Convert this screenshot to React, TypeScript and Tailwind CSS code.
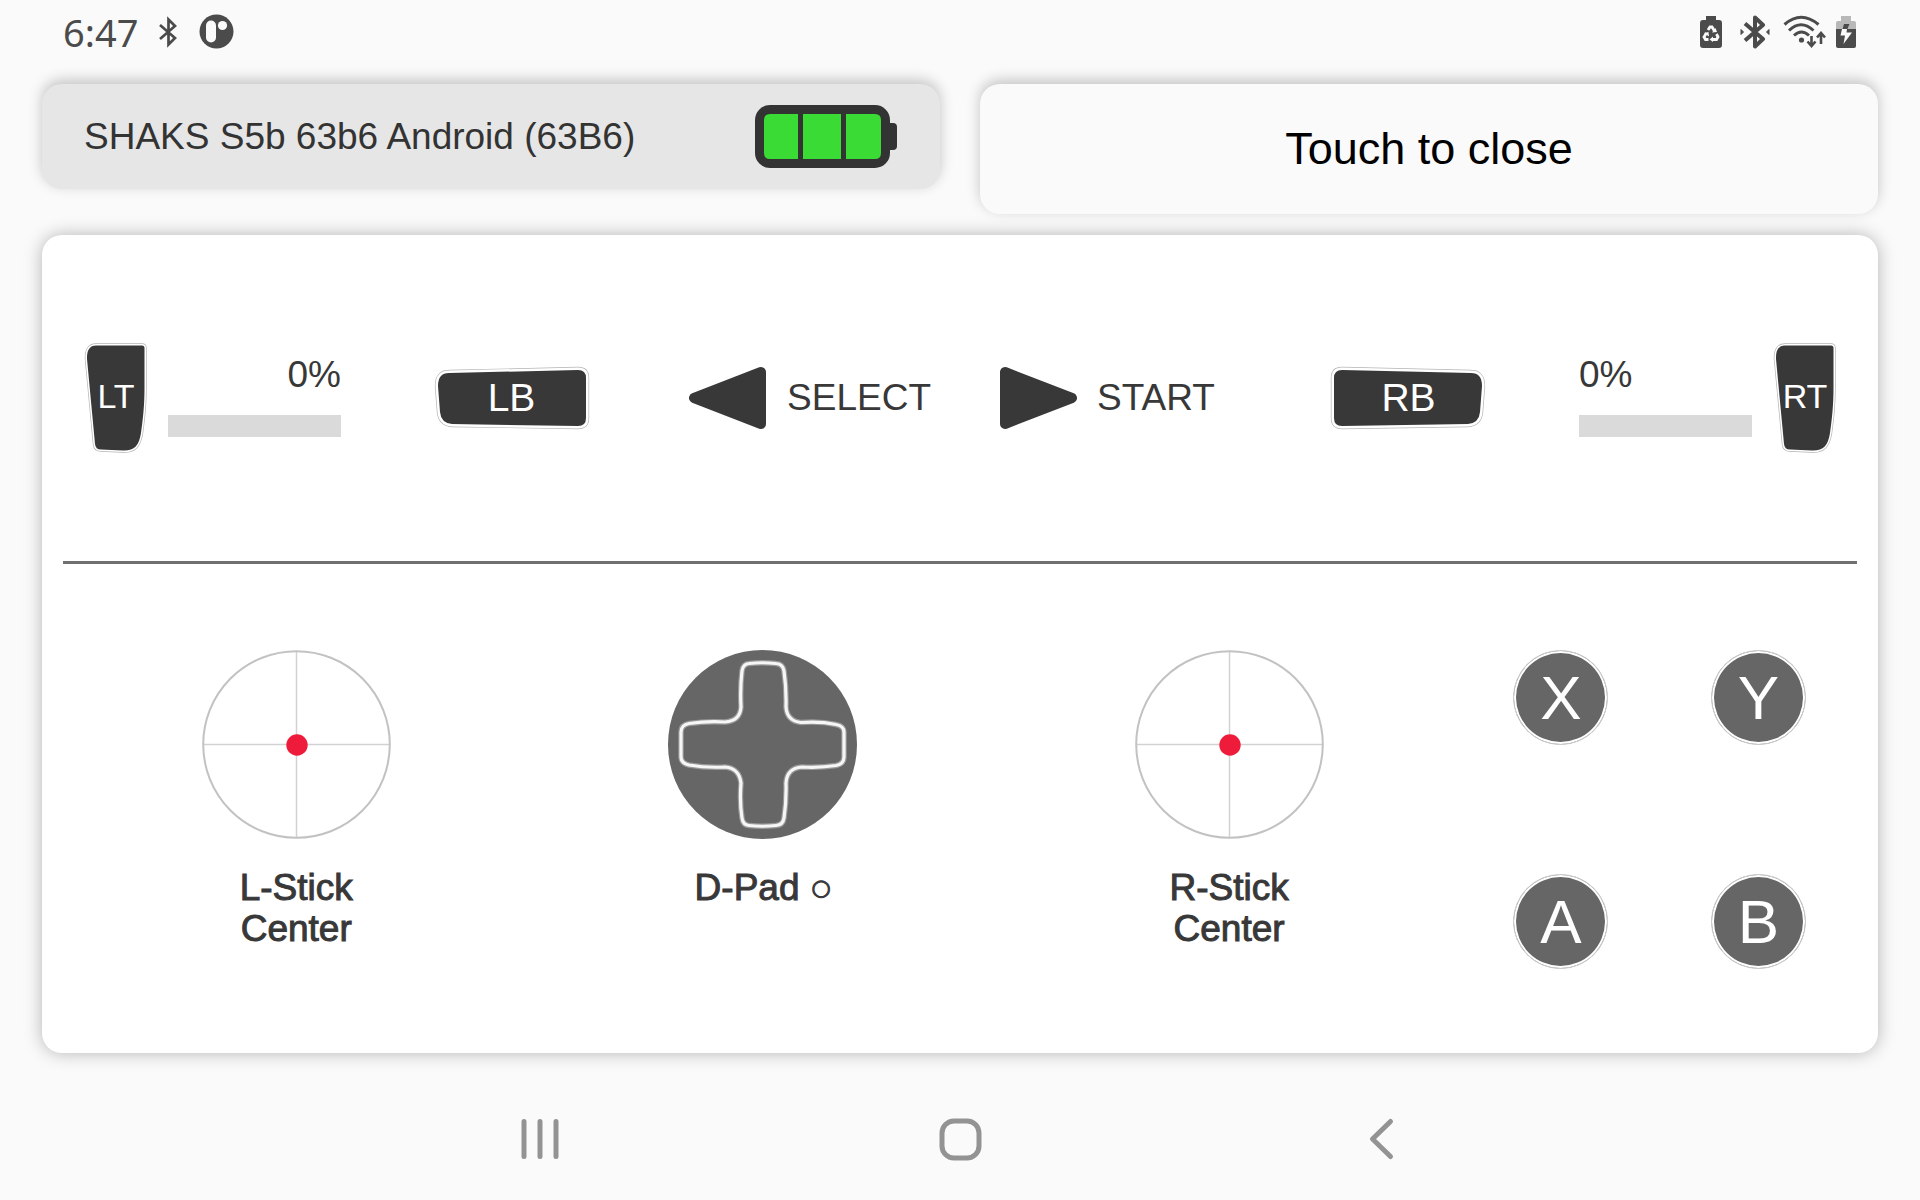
import React from 'react';

const TRIGGER_PATH =
  'M12 2.5H58Q60.5 2.5 60.5 5V45C60.5 62 59 76 57 90C55 103 50 108 39 107.5L17 106.5Q11.5 106.5 11 101L3 16Q2.5 2.5 12 2.5Z';
const BUMPER_PATH = 'M15 7L144 4Q152 4 152 12V52Q152 60 144 60L18 58Q7 57 6 46L4 20Q4 7 15 7Z';
const DPAD_PATH =
  'M81 13.5Q94 12 108 13.5Q115 14 116 21Q118.5 38 118 57Q119 71 133 72.5Q152 71 168 74.5Q176 76 176 82V107Q176 114 168 115.5Q152 118 134 117Q119 118 118 133Q118.5 152 116 168Q115 175 108 175.5Q94 177 81 175.5Q75 175 74 168Q71.5 152 73 133Q71 118 57 117Q38 118 21 115Q13 113 13 107V82Q13 75 21 73.5Q38 71 57 72Q72 71 73 57Q72 38 74 21Q75 14 81 13.5Z';

function StatusBar() {
  return (
    <header className="flex h-16 items-center justify-between px-[63px] text-[#4b4b4b]">
      <div className="flex items-center">
        <span className="font-['Noto_Sans',sans-serif] text-[38px] leading-[48px]">6:47</span>
        <svg className="ml-5 h-8 w-5" viewBox="0 0 20 32" fill="none" stroke="currentColor" strokeWidth="2.7">
          <path d="M2 9L17 22L10.500 28.500V3.500L17 10L2 23" />
        </svg>
        <svg className="ml-5 h-9 w-9" viewBox="0 0 36 36">
          <circle cx="18.500" cy="17.500" r="17" fill="currentColor" />
          <rect x="8" y="6.500" width="10" height="22" rx="5" fill="#fafafa" />
          <circle cx="24.500" cy="11.500" r="4.600" fill="#fafafa" />
        </svg>
      </div>

      <div className="flex items-center">
        <svg className="h-[34px] w-6" viewBox="0 0 24 34">
          <path
            d="M7 1H17V5H20Q23 5 23 8V30Q23 33 20 33H4Q1 33 1 30V8Q1 5 4 5H7Z"
            fill="currentColor"
          />
          <path
            d="M9 15L11 12H13L15.500 16M17.500 19L19 22L17.500 24.500H13.500M9.500 24.500H6.500L5 22L7.500 18"
            fill="none"
            stroke="#fafafa"
            strokeWidth="2.800"
          />
          <path d="M13 17.500L18 17L16.500 13Z M14 21.500V27L10.500 24.500Z M5 18L9.500 17L10 21.500Z" fill="#fafafa" />
        </svg>
        <svg className="ml-4 h-[34px] w-8" viewBox="0 0 32 34">
          <path
            d="M6 8.500L24 24L16 31.500V2.500L24 10L6 25.500"
            fill="none"
            stroke="currentColor"
            strokeWidth="4"
            strokeLinejoin="round"
          />
          <path d="M2 14.500L4.500 17L2 19.500Z M30 14.500L27.500 17L30 19.500Z" fill="currentColor" stroke="currentColor" />
        </svg>
        <svg className="ml-3 h-[34px] w-11" viewBox="0 0 44 34" fill="none" stroke="currentColor" strokeWidth="3">
          <path d="M1.500 9.500Q18 -5 35.500 9.500M6 15.500Q18 4 30.500 15.500M11 20.500Q18.500 13.500 26 20.500" />
          <circle cx="18.500" cy="25" r="2.600" fill="currentColor" stroke="none" />
          <path d="M28.500 21V30M24.500 26.500L28.500 31L32.500 26.500M38 29V20M34 22.500L38 18L42 22.500" strokeWidth="2.600" />
        </svg>
        <svg className="ml-2 h-[34px] w-[22px]" viewBox="0 0 22 34">
          <path d="M6 1H16V6H19Q21 6 21 8V14H1V8Q1 6 3 6H6Z" fill="#b8b8b8" />
          <path d="M1 14H21V31Q21 33 19 33H3Q1 33 1 31Z" fill="currentColor" />
          <path d="M9 9H14.500L11.500 16H7Z" fill="currentColor" />
          <path d="M7 14H12L11.500 17.500H17L8.500 29L10 20.500H5.500Z" fill="#fafafa" />
        </svg>
      </div>
    </header>
  );
}

function DeviceBattery() {
  return (
    <svg className="h-[63px] w-[142px]" viewBox="0 0 142 63" role="img" aria-label="Battery full">
      <rect x="130" y="18" width="12" height="27" rx="4" fill="#333" />
      <rect width="135" height="63" rx="15" fill="#333" />
      <path d="M43 9V54H15Q9 54 9 48V15Q9 9 15 9Z M48 9H86V54H48Z M91 9H120Q126 9 126 15V48Q126 54 120 54H91Z" fill="#3adb34" />
    </svg>
  );
}

// dark key with a white rim and a hairline around it
function KeyShape({ d, rim, mirror }: { d: string; rim: number; mirror?: string }) {
  return (
    <g transform={mirror} strokeLinejoin="round">
      <path d={d} fill="#fff" stroke="#b4b4b4" strokeWidth={rim + 1.4} />
      <path d={d} fill="#383838" stroke="#fff" strokeWidth={rim} />
      <path d={d} fill="#383838" />
    </g>
  );
}

function Trigger({ label }: { label: string }) {
  return (
    <button type="button" className="grid h-[109px] w-[63px] place-items-center">
      <svg className="col-start-1 row-start-1 h-full w-full overflow-visible" viewBox="0 0 63 109">
        <KeyShape d={TRIGGER_PATH} rim={3} />
      </svg>
      <span className="z-10 col-start-1 row-start-1 pb-1 pl-px text-[34px] leading-10 text-white">{label}</span>
    </button>
  );
}

function Bumper({ label, mirror }: { label: string; mirror?: string }) {
  return (
    <button type="button" className="grid h-[63px] w-[155px] place-items-center">
      <svg className="col-start-1 row-start-1 h-full w-full overflow-visible" viewBox="0 0 155 63">
        <KeyShape d={BUMPER_PATH} rim={5} mirror={mirror} />
      </svg>
      <span className="z-10 col-start-1 row-start-1 text-[39px] leading-10 text-white">{label}</span>
    </button>
  );
}

function TriggerLevel({ label, value, align }: { label: string; value: number; align: string }) {
  return (
    <div className={`flex w-[173px] flex-col gap-4 pb-2 ${align}`}>
      <span className="text-[37px] leading-[48px]">{value}%</span>
      <div role="progressbar" aria-label={label} aria-valuenow={value} className="h-[22px] w-full bg-[#dadada]">
        <div className="h-full bg-[#383838]" style={{ width: `${value}%` }}></div>
      </div>
    </div>
  );
}

function MenuKey({ label, d }: { label: string; d: string }) {
  return (
    <button type="button" className="flex items-center gap-5">
      <svg className="h-16 w-[78px]" viewBox="0 0 78 64">
        <path d={d} fill="#383838" stroke="#383838" strokeWidth="10" strokeLinejoin="round" />
      </svg>
      <span className="text-[37px] leading-[48px]">{label}</span>
    </button>
  );
}

function Label({ children }: { children: React.ReactNode }) {
  return (
    <div className="text-center text-[37px] leading-[41px] [-webkit-text-stroke:1px_#383838]">{children}</div>
  );
}

function Stick({ name }: { name: string }) {
  return (
    <div className="flex flex-1 flex-col items-center gap-7">
      <svg className="h-[189px] w-[189px]" viewBox="0 0 189 189" fill="none">
        <path d="M94.500 1V188M1 94.500H188" stroke="#d2d2d2" strokeWidth="1.500" />
        <circle cx="94.500" cy="94.500" r="93.300" stroke="#c2c2c2" strokeWidth="2" />
        <circle cx="95" cy="95" r="10.700" fill="#ee1c3a" />
      </svg>
      <Label>
        {name}
        <br />
        Center
      </Label>
    </div>
  );
}

function DPad() {
  return (
    <div className="flex flex-1 flex-col items-center gap-7">
      <svg className="h-[189px] w-[189px]" viewBox="0 0 189 189">
        <circle cx="94.500" cy="94.500" r="94.500" fill="#666" />
        <path d={DPAD_PATH} fill="none" stroke="#999" strokeWidth="5.500" />
        <path d={DPAD_PATH} fill="none" stroke="#f6f6f6" strokeWidth="3.200" />
      </svg>
      <Label>
        <span className="flex items-center gap-3">
          D-Pad
          <span className="font-['DejaVu_Sans',sans-serif] text-[22px]">○</span>
        </span>
      </Label>
    </div>
  );
}

function FaceButton({ label }: { label: string }) {
  return (
    <button
      type="button"
      className="flex size-[95px] items-center justify-center rounded-full border border-[#d0d0d0] bg-[#666] text-[62px] leading-none text-white shadow-[inset_0_0_0_2px_#fff]"
    >
      {label}
    </button>
  );
}

export default function App() {
  return (
    <div className="flex min-h-screen flex-col bg-[#fafafa] font-['Liberation_Sans',Arial,sans-serif] text-[#383838]">
      <StatusBar />

      <main className="flex flex-1 flex-col gap-[21px] px-[42px] pt-5">
        <div className="grid grid-cols-2 items-start gap-10">
          <div className="flex h-[105px] items-center justify-between rounded-[20px] bg-[#e6e6e6] pr-[43px] pl-[42px] shadow-[0_-4px_14px_rgba(0,0,0,0.22)]">
            <span className="text-[37px] leading-[48px] text-[#333]">SHAKS S5b 63b6 Android (63B6)</span>
            <DeviceBattery />
          </div>
          <button
            type="button"
            className="h-[130px] rounded-[20px] bg-[#fafafa] text-[45px] text-black shadow-[0_-4px_14px_rgba(0,0,0,0.22)]"
          >
            Touch to close
          </button>
        </div>

        <section className="flex flex-1 flex-col rounded-[20px] bg-white px-[21px] shadow-[0_0_18px_rgba(0,0,0,0.28)]">
          <div className="flex items-center justify-between border-b-[3px] border-[#707070] px-[21px] pt-[108px] pb-[109px]">
            <div className="flex items-center gap-[93px]">
              <div className="flex items-center gap-[21px]">
                <Trigger label="LT" />
                <TriggerLevel label="LT" value={0} align="items-end" />
              </div>
              <Bumper label="LB" />
            </div>

            <div className="flex items-center gap-[68px] pr-4">
              <MenuKey label="SELECT" d="M5 32L72 6V58Z" />
              <MenuKey label="START" d="M73 32L6 6V58Z" />
            </div>

            <div className="flex items-center gap-[93px]">
              <Bumper label="RB" mirror="matrix(-1 0 0 1 155 0)" />
              <div className="flex items-center gap-[21px]">
                <TriggerLevel label="RT" value={0} align="items-start" />
                <Trigger label="RT" />
              </div>
            </div>
          </div>

          <div className="flex pt-[86px] pb-[83px]">
            <div className="flex flex-[78]">
              <Stick name="L-Stick" />
              <DPad />
              <Stick name="R-Stick" />
            </div>
            <div className="grid flex-[22] grid-cols-2 content-start justify-items-center gap-y-[129px]">
              {['X', 'Y', 'A', 'B'].map(label => (
                <FaceButton key={label} label={label} />
              ))}
            </div>
          </div>
        </section>
      </main>

      <nav className="mt-[25px] h-[122px]">
        <div className="mx-auto grid h-full max-w-[1260px] grid-cols-3 items-center justify-items-center">
          <button type="button" aria-label="Recents">
            <svg className="size-11" viewBox="0 0 44 44" stroke="#939393" strokeWidth="5" strokeLinecap="round">
              <path d="M6 4.500V39.500M22 4.500V39.500M38 4.500V39.500" />
            </svg>
          </button>
          <button type="button" aria-label="Home">
            <svg className="size-11" viewBox="0 0 44 44" fill="none" stroke="#939393" strokeWidth="5">
              <rect x="4" y="4" width="37" height="37" rx="12" />
            </svg>
          </button>
          <button type="button" aria-label="Back">
            <svg className="size-11" viewBox="0 0 44 44" fill="none" stroke="#939393" strokeWidth="5" strokeLinecap="round" strokeLinejoin="round">
              <path d="M32.500 4.500L14.500 22L32.500 39.500" />
            </svg>
          </button>
        </div>
      </nav>
    </div>
  );
}
